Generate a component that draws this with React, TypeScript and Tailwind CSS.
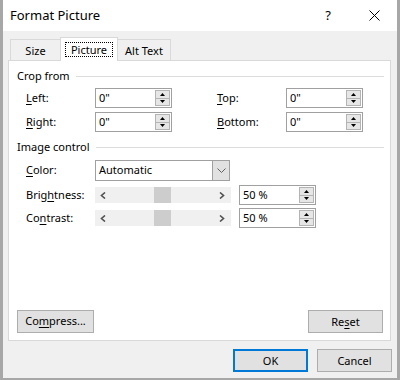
import React from "react";

function Spinner() {
  return (
    <div className="w-[15px] h-[16px] mr-px flex flex-col border border-[#b4b4b4] bg-[#e6e6e6]">
      <div className="flex-1 flex items-center justify-center border-b border-[#b4b4b4]">
        <svg width="5" height="3" viewBox="0 0 5 3">
          <polygon points="2.5,0 5,3 0,3" fill="#000" />
        </svg>
      </div>
      <div className="flex-1 flex items-center justify-center">
        <svg width="5" height="3" viewBox="0 0 5 3">
          <polygon points="0,0 5,0 2.5,3" fill="#000" />
        </svg>
      </div>
    </div>
  );
}

function SpinInput({ value }: { value: string }) {
  return (
    <div className="w-[77px] h-[20px] flex items-center border border-[#a0a0a0] bg-white">
      <span className="flex-1 pl-[3px] leading-[14px]">{value}</span>
      <Spinner />
    </div>
  );
}

function U({ children }: { children: React.ReactNode }) {
  return <span className="underline underline-offset-2">{children}</span>;
}

function GroupHeader({ title }: { title: string }) {
  return (
    <div className="flex items-center h-[14px] pl-[8px] pr-[6px]">
      <span className="leading-[14px]">{title}</span>
      <div className="flex-1 h-px bg-[#dcdcdc] ml-[6px]" />
    </div>
  );
}

function Slider() {
  return (
    <div className="w-[136px] h-[16px] bg-[#f0f0f0] flex items-center">
      <svg width="6" height="7" viewBox="0 0 6 7" className="ml-[5px]">
        <polyline points="5,0.5 1.5,3.5 5,6.5" fill="none" stroke="#505050" strokeWidth="1.6" />
      </svg>
      <div className="ml-[48px] w-[17px] h-[16px] bg-[#cdcdcd]" />
      <div className="flex-1" />
      <svg width="6" height="7" viewBox="0 0 6 7" className="mr-[6px]">
        <polyline points="1,0.5 4.5,3.5 1,6.5" fill="none" stroke="#505050" strokeWidth="1.6" />
      </svg>
    </div>
  );
}

function Button({ children, primary }: { children: React.ReactNode; primary?: boolean }) {
  return (
    <div
      className={
        "w-[75px] h-[23px] bg-[#e1e1e1] flex items-center justify-center leading-[14px] " +
        (primary ? "border-2 border-[#0078d7]" : "border border-[#adadad]")
      }
    >
      {children}
    </div>
  );
}

export default function App() {
  return (
    <div className="w-[400px] h-[380px] bg-[#f0f0f0] border-x-[3px] border-b-[2px] border-[#a7a7a7] flex flex-col text-[11px] text-black font-['Noto_Sans',sans-serif]">
      {/* Title bar */}
      <div className="h-[31px] bg-white flex items-center pl-[7px] shrink-0">
        <span className="flex-1 text-[13px]">Format Picture</span>
        <span className="w-[46px] text-center text-[13px]">?</span>
        <div className="w-[46px] flex items-center justify-center">
          <svg width="11" height="11" viewBox="0 0 11 11">
            <line x1="0.5" y1="0.5" x2="10.5" y2="10.5" stroke="#000" strokeWidth="1" />
            <line x1="10.5" y1="0.5" x2="0.5" y2="10.5" stroke="#000" strokeWidth="1" />
          </svg>
        </div>
      </div>

      {/* Tabs + panel */}
      <div className="px-[5px] mt-[6px]">
        <div className="flex items-end h-[23px] pl-[2px]">
          <div className="w-[50px] h-[21px] border-l border-t border-[#d9d9d9] flex items-center justify-center pt-[2px]">
            Size
          </div>
          <div className="relative z-10 w-[58px] h-[24px] -mb-px bg-white border-x border-t border-[#d9d9d9] flex justify-center pt-[4px]">
            <div className="w-[48px] h-[15px] border border-dotted border-black flex items-center justify-center leading-[13px]">
              Picture
            </div>
          </div>
          <div className="w-[53px] h-[21px] border-r border-t border-[#d9d9d9] flex items-center justify-center pt-[2px]">
            Alt Text
          </div>
        </div>
        <div className="w-[383px] h-[281px] bg-white border border-[#d9d9d9] flex flex-col">
          <div className="mt-[8px]">
            <GroupHeader title="Crop from" />
          </div>
          <div className="flex items-center mt-[5px] pl-[17px]">
            <span className="w-[69px]"><U>L</U>eft:</span>
            <SpinInput value={'0"'} />
            <span className="w-[69px] ml-[45px]"><U>T</U>op:</span>
            <SpinInput value={'0"'} />
          </div>
          <div className="flex items-center mt-[4px] pl-[17px]">
            <span className="w-[69px]"><U>R</U>ight:</span>
            <SpinInput value={'0"'} />
            <span className="w-[69px] ml-[45px]"><U>B</U>ottom:</span>
            <SpinInput value={'0"'} />
          </div>
          <div className="mt-[8px]">
            <GroupHeader title="Image control" />
          </div>
          <div className="flex items-center mt-[6px] pl-[17px]">
            <span className="w-[69px]"><U>C</U>olor:</span>
            <div className="w-[135px] h-[21px] border border-[#a0a0a0] bg-white flex items-center">
              <span className="flex-1 pl-[3px]">Automatic</span>
              <div className="w-[17px] h-[19px] bg-[#e1e1e1] border-l border-[#a0a0a0] flex items-center justify-center">
                <svg width="9" height="5" viewBox="0 0 9 5">
                  <polyline points="0.5,0.5 4.5,4.5 8.5,0.5" fill="none" stroke="#606060" strokeWidth="1" />
                </svg>
              </div>
            </div>
          </div>
          <div className="flex items-center mt-[4px] pl-[17px]">
            <span className="w-[69px]">Brig<U>h</U>tness:</span>
            <Slider />
            <div className="ml-[8px]">
              <SpinInput value="50 %" />
            </div>
          </div>
          <div className="flex items-center mt-[3px] pl-[17px]">
            <span className="w-[69px]">Co<U>n</U>trast:</span>
            <Slider />
            <div className="ml-[8px]">
              <SpinInput value="50 %" />
            </div>
          </div>
          <div className="flex-1" />
          <div className="flex items-center justify-between pl-[8px] pr-[7px] mb-[7px]">
            <div className="w-[77px] h-[23px] bg-[#e1e1e1] border border-[#adadad] flex items-center justify-center">
              Co<U>m</U>press...
            </div>
            <Button>Re<U>s</U>et</Button>
          </div>
        </div>
      </div>

      <div className="flex justify-end gap-[9px] pr-[5px] mt-[8px]">
        <Button primary>OK</Button>
        <Button>Cancel</Button>
      </div>
    </div>
  );
}
